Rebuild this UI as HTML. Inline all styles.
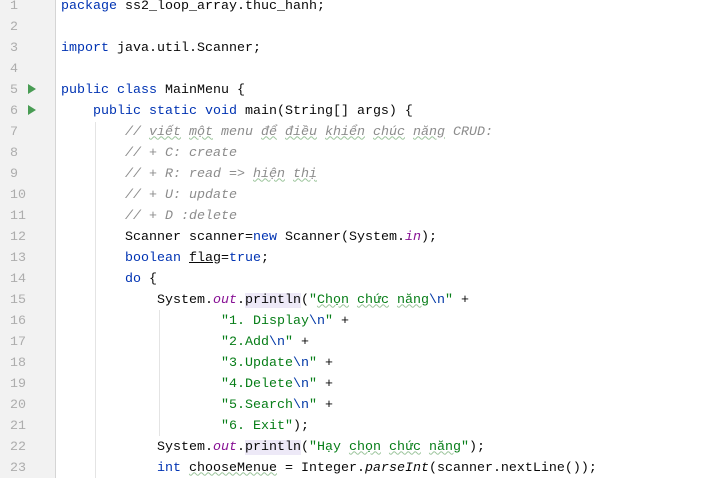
<!DOCTYPE html>
<html><head><meta charset="utf-8"><style>
body{margin:0;width:706px;height:478px;overflow:hidden;background:#fff;position:relative;font-family:"Liberation Mono","Noto Sans CJK SC",monospace;font-size:13.33px}
.g{position:absolute;left:0;top:0;width:55px;height:478px;background:#f2f2f2;border-right:1px solid #d5d5d5}
.ln{position:absolute;left:10px;color:#adadad;line-height:21px}
.c{position:absolute;left:61px;line-height:21px;white-space:pre;color:#080808}
.k{color:#0033b3}
.s{color:#067d17}
.e{color:#0037a6}
.cm{color:#8c8c8c;font-style:italic}
.f{color:#871094;font-style:italic}
.it{font-style:italic}
.hl{background:#ede9f7}
.w{text-decoration:underline wavy #9bc49b;text-decoration-thickness:1px}
.run{position:absolute;left:28px;width:0;height:0;border-left:8px solid #499c54;border-top:5px solid transparent;border-bottom:5px solid transparent}
.ig{position:absolute;width:1px;background:#e4e4e4}
</style></head><body>
<div class="g"></div>
<div class="run" style="top:84px"></div>
<div class="run" style="top:105px"></div>
<div class="ig" style="left:95px;top:122px;height:356px"></div>
<div class="ig" style="left:159px;top:310px;height:126px"></div>
<div id="lines"></div>
<div class="ln" style="top:-4.5px">1<br>2<br>3<br>4<br>5<br>6<br>7<br>8<br>9<br>10<br>11<br>12<br>13<br>14<br>15<br>16<br>17<br>18<br>19<br>20<br>21<br>22<br>23</div>
<div class="c" style="top:-4.5px"><span class="k">package</span> ss2_loop_array.thuc_hanh;

<span class="k">import</span> java.util.Scanner;

<span class="k">public class</span> MainMenu {
    <span class="k">public static void</span> main(String[] args) {
        <span class="cm">// <span class="w">viết</span> <span class="w">một</span> menu <span class="w">để</span> <span class="w">điều</span> <span class="w">khiển</span> <span class="w">chúc</span> <span class="w">năng</span> CRUD:</span>
        <span class="cm">// + C: create</span>
        <span class="cm">// + R: read =&gt; <span class="w">hiện</span> <span class="w">thị</span></span>
        <span class="cm">// + U: update</span>
        <span class="cm">// + D :delete</span>
        Scanner scanner=<span class="k">new</span> Scanner(System.<span class="f">in</span>);
        <span class="k">boolean</span> <span style="text-decoration:underline">flag</span>=<span class="k">true</span>;
        <span class="k">do</span> {
            System.<span class="f">out</span>.<span class="hl">println</span>(<span class="s">"<span class="w">Chọn</span> <span class="w">chức</span> <span class="w">năng</span><span class="e">\n</span>"</span> +
                    <span class="s">"1. Display<span class="e">\n</span>"</span> +
                    <span class="s">"2.Add<span class="e">\n</span>"</span> +
                    <span class="s">"3.Update<span class="e">\n</span>"</span> +
                    <span class="s">"4.Delete<span class="e">\n</span>"</span> +
                    <span class="s">"5.Search<span class="e">\n</span>"</span> +
                    <span class="s">"6. Exit"</span>);
            System.<span class="f">out</span>.<span class="hl">println</span>(<span class="s">"Hạy <span class="w">chọn</span> <span class="w">chức</span> <span class="w">năng</span>"</span>);
            <span class="k">int</span> <span class="w">chooseMenue</span> = Integer.<span class="it">parseInt</span>(scanner.nextLine());</div>
</body></html>
